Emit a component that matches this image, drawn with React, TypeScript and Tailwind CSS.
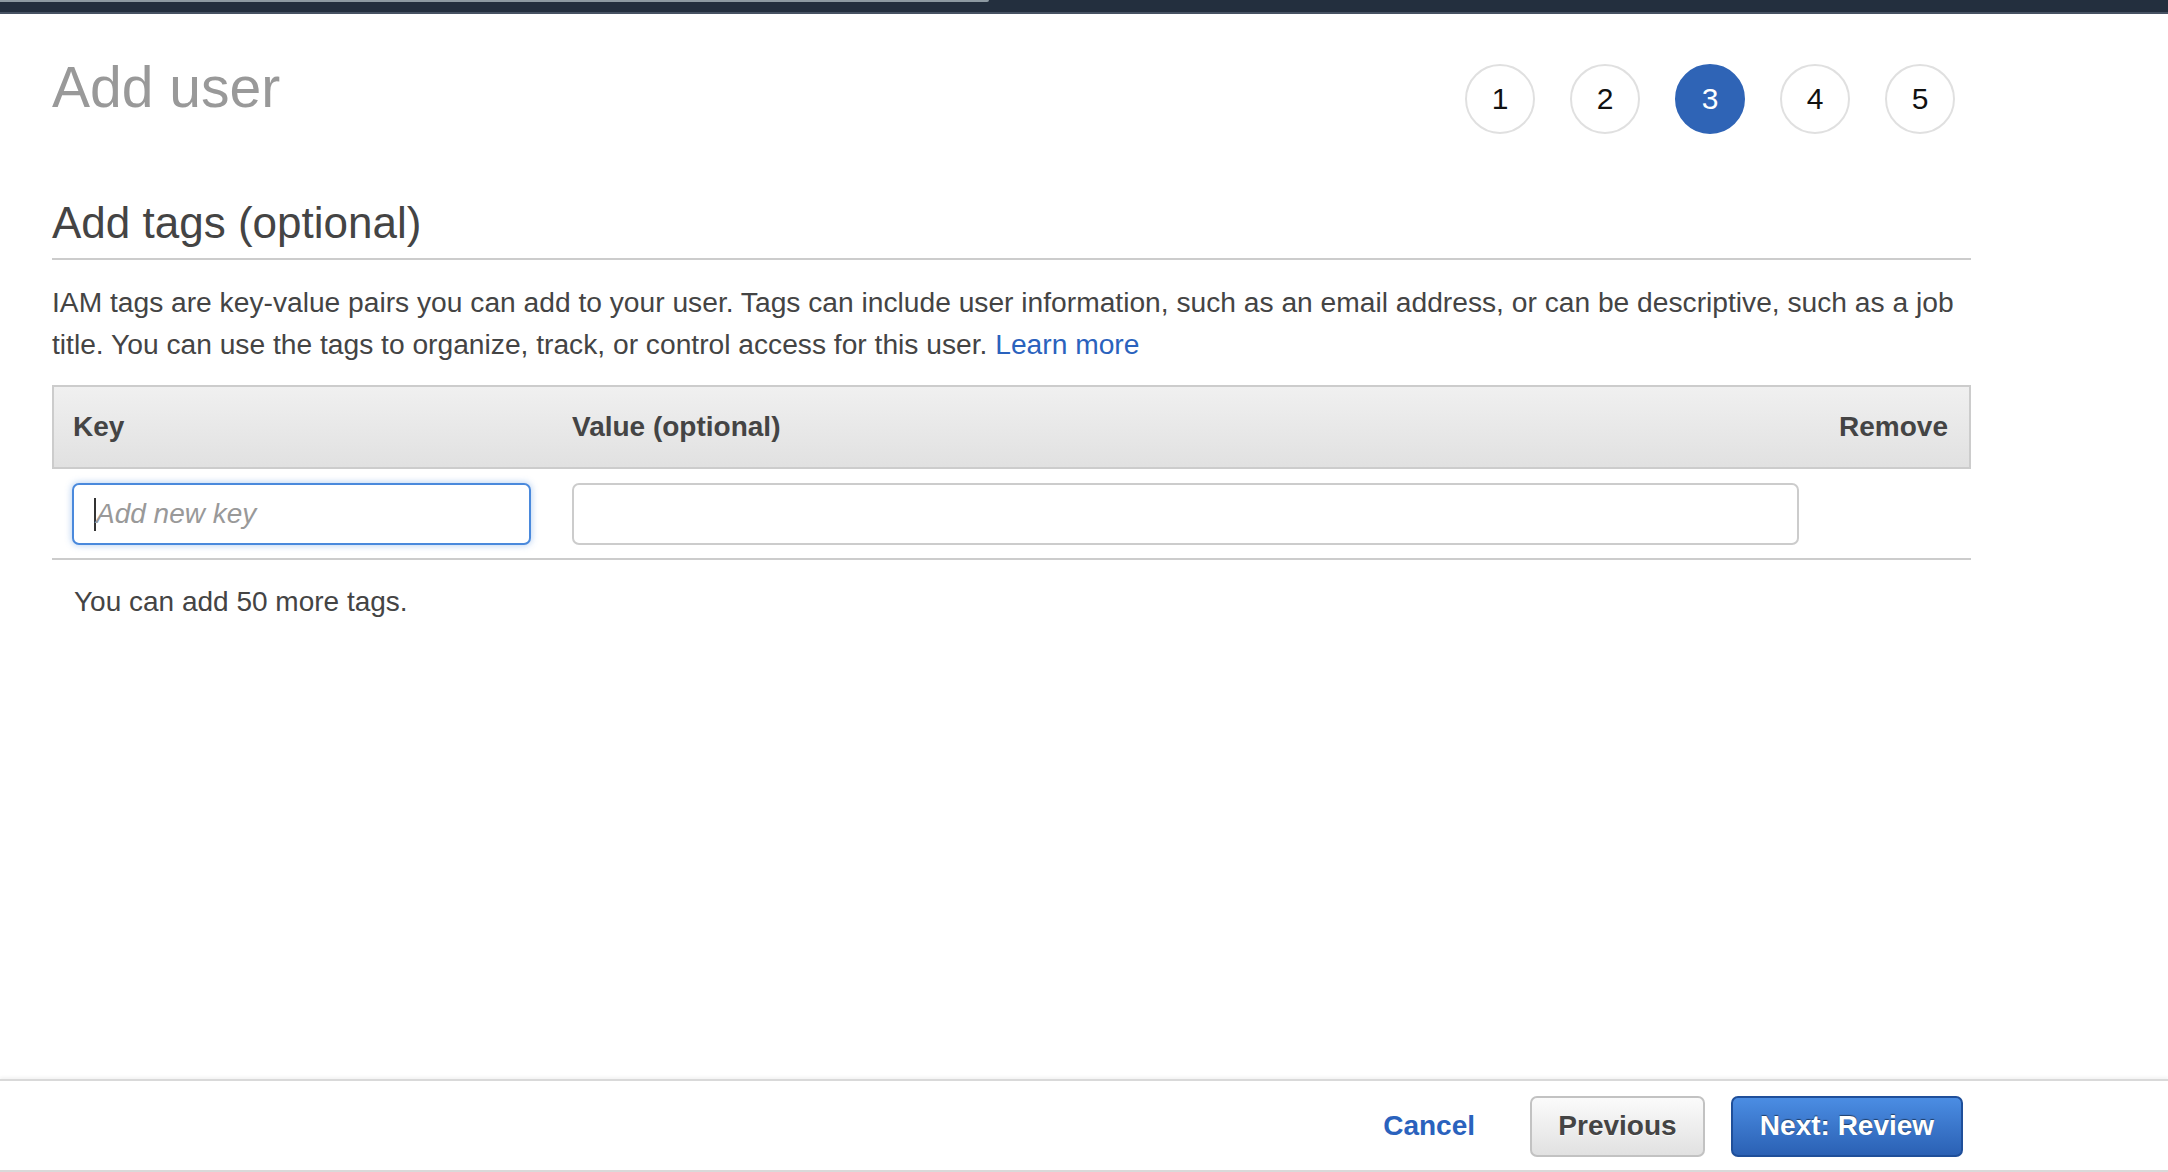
import React from "react";

const font = { fontFamily: '"Liberation Sans", Arial, Helvetica, sans-serif' };

function Step({ n, active }: { n: number; active?: boolean }) {
  return (
    <div
      className={
        "w-[70px] h-[70px] rounded-full flex items-center justify-center text-[30px] leading-none " +
        (active
          ? "bg-[#2f64b6] text-white border-2 border-[#2f64b6]"
          : "bg-white text-[#111111] border-2 border-[#e0e0e0]")
      }
    >
      {n}
    </div>
  );
}

export default function App() {
  return (
    <div className="min-h-screen w-full flex flex-col bg-white" style={font}>
      {/* top bar */}
      <div className="h-[14px] bg-[#232f3e] flex flex-col">
        <div className="h-[2px] w-[989px] bg-[#8d9aa2] rounded-br-sm" />
        <div className="flex-1" />
        <div className="h-[2px] bg-[#475263]" />
      </div>

      <main className="flex-1 pl-[52px]">
        <div className="w-[1919px]">
          {/* title row */}
          <div className="mt-[44px] flex items-start justify-between">
            <h1 className="text-[57px] leading-[58px] text-[#999999] font-normal">
              Add user
            </h1>
            <div className="mt-[6px] pr-[16px] flex gap-[35px]">
              <Step n={1} />
              <Step n={2} />
              <Step n={3} active />
              <Step n={4} />
              <Step n={5} />
            </div>
          </div>

          {/* section heading */}
          <div className="mt-[63px] pb-[9px] border-b-2 border-[#cccccc]">
            <h2 className="text-[44px] leading-[52px] text-[#444444] font-normal">
              Add tags (optional)
            </h2>
          </div>

          <p className="mt-[21px] text-[28.2px] leading-[42px] text-[#444444]">
            IAM tags are key-value pairs you can add to your user. Tags can include user
            information, such as an email address, or can be descriptive, such as a job title.
            You can use the tags to organize, track, or control access for this user.{" "}
            <a className="text-[#2a62bd]">Learn more</a>
          </p>

          {/* table */}
          <div className="mt-[20px]">
            <div className="h-[84px] border-2 border-[#cccccc] bg-gradient-to-b from-[#f0f0f0] to-[#e1e1e1] flex items-center text-[28px] leading-[42px] font-bold text-[#444444]">
              <div className="w-[499px] pl-[19px]">Key</div>
              <div className="w-[1266px] pl-[19px]">Value (optional)</div>
              <div className="flex-1 text-right pr-[21px]">Remove</div>
            </div>
            <div className="flex items-center pl-[20px] pt-[14px] pb-[13px] border-b-2 border-[#cccccc]">
              <div className="w-[459px] h-[62px] rounded-[7px] border-2 border-[#4a89dc] shadow-[0_0_6px_1px_rgba(74,137,220,0.35)] flex items-center pl-[20px] bg-white">
                <span className="w-[2px] h-[33px] bg-[#333333]" />
                <span className="italic text-[28px] text-[#999999] leading-none">Add new key</span>
              </div>
              <div className="ml-[41px] w-[1227px] h-[62px] rounded-[7px] border-2 border-[#cccccc] bg-white" />
            </div>
          </div>

          <p className="mt-[21px] pl-[22px] text-[28px] leading-[42px] text-[#444444]">
            You can add 50 more tags.
          </p>
        </div>
      </main>

      {/* footer */}
      <footer className="h-[93px] border-t-2 border-b-2 border-[#d9d9d9] shadow-[0_-2px_3px_rgba(0,0,0,0.05)] flex items-center justify-end pr-[205px] pt-[1px]">
        <button className="text-[28px] font-bold text-[#2a62bd] leading-none">Cancel</button>
        <button className="ml-[55px] w-[175px] h-[61px] rounded-[7px] border-2 border-[#c2c2c2] bg-gradient-to-b from-[#fbfbfb] to-[#e1e1e1] text-[28px] font-bold text-[#444444] [text-shadow:0_1px_0_rgba(255,255,255,0.8)]">
          Previous
        </button>
        <button className="ml-[26px] w-[232px] h-[61px] rounded-[7px] border-2 border-[#1f4f9a] bg-gradient-to-b from-[#4b8de3] to-[#2b61b4] text-[28px] font-bold text-white [text-shadow:0_-1px_1px_rgba(0,0,0,0.5)]">
          Next: Review
        </button>
      </footer>
    </div>
  );
}
